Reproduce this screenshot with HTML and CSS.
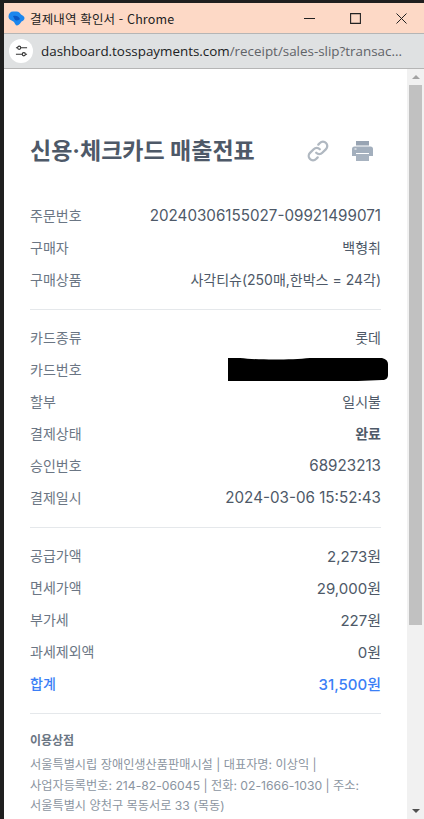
FILE: index.html
```html
<!DOCTYPE html>
<html lang="ko">
<head>
    <meta charset="UTF-8">
    <meta name="viewport" content="width=device-width, initial-scale=1.0">
    <title>결제내역 확인서</title>
    <link rel="stylesheet" href="styles.css">
</head>
<body>
    <div class="window">
        <div class="titlebar">
            <svg class="app-icon" viewBox="0 0 17 15">
                <path d="M5 0.500h3.500c2.500 0 3.500 1.500 4.500 3 1.500.8 3.500 2 3.500 3.500 0 2-1.500 3-3 3.500-1 1.500-2.500 3.500-4.500 4C7.500 14.500 7 12.500 6 11 4.500 9.500 0.500 9 0.500 5.500 0.500 2.500 2.500 0.500 5 0.500z" fill="#1b86ee"/>
                <path d="M5 5c3-.8 5.500 0 7 3-1.500 1.500-3.500 1.800-5 1z" fill="#0b57c4"/>
            </svg>
            <span class="window-title">결제내역 확인서 - Chrome</span>
            <div class="window-buttons">
                <svg viewBox="0 0 11 11"><path d="M0 5.500h11" stroke="#222" stroke-width="1" fill="none"/></svg>
                <svg viewBox="0 0 11 11"><path d="M.6.600h9.800v9.800H.6z" stroke="#222" stroke-width="1.100" fill="none"/></svg>
                <svg viewBox="0 0 11 11"><path d="M.5.500l10 10M10.500.500l-10 10" stroke="#222" stroke-width="1" fill="none"/></svg>
            </div>
        </div>
        <div class="addressbar">
            <div class="site-icon">
                <svg viewBox="0 0 14 12">
                    <path d="M1 2.500h1.500M6.500 2.500H13M1 9.500h6.500M11.500 9.500H13" stroke="#333" stroke-width="1.300" fill="none"/>
                    <circle cx="4.500" cy="2.500" r="1.700" fill="none" stroke="#333" stroke-width="1.200"/>
                    <circle cx="9.500" cy="9.500" r="1.700" fill="none" stroke="#333" stroke-width="1.200"/>
                </svg>
            </div>
            <div class="url"><span class="url-host">dashboard.tosspayments.com</span>/receipt/sales-slip?transac...</div>
        </div>
        <div class="viewport">
            <main class="receipt">
                <div class="receipt-head">
                    <h1>신용·체크카드 매출전표</h1>
                    <div class="head-icons">
                        <svg class="icon-link" viewBox="0 0 24 24">
                            <path d="M10.200 13.800a4.300 4.300 0 0 0 6.100 0l3.700-3.700a4.300 4.300 0 0 0-6.100-6.100l-1.600 1.600" fill="none" stroke="#b0b8c1" stroke-width="2.300" stroke-linecap="round"/>
                            <path d="M13.800 10.200a4.300 4.300 0 0 0-6.100 0L4 13.900A4.300 4.300 0 0 0 10.100 20l1.600-1.600" fill="none" stroke="#b0b8c1" stroke-width="2.300" stroke-linecap="round"/>
                        </svg>
                        <svg class="icon-print" viewBox="0 0 21 20">
                            <path d="M4 0h13v4.500H4z" fill="#98a4b3"/>
                            <path d="M2.500 5.500h16A2.500 2.500 0 0 1 21 8v7h-4v-3H4v3H0V8a2.500 2.500 0 0 1 2.500-2.500z" fill="#a3afbd"/>
                            <path d="M4 13h13v7H4z" fill="#a8b3c0"/>
                            <path d="M2.500 8h2" stroke="#fff" stroke-width="1"/>
                        </svg>
                    </div>
                </div>

                <section class="group">
                    <div class="row"><span class="label">주문번호</span><span class="value num">20240306155027-09921499071</span></div>
                    <div class="row"><span class="label">구매자</span><span class="value">백형취</span></div>
                    <div class="row"><span class="label">구매상품</span><span class="value">사각티슈(250매,한박스 = 24각)</span></div>
                </section>

                <section class="group">
                    <div class="row"><span class="label">카드종류</span><span class="value">롯데</span></div>
                    <div class="row">
                        <span class="label">카드번호</span>
                        <svg class="redacted" viewBox="0 0 160 23">
                            <path d="M0 0h12c18 2 50 2 70 0h72c4 1 6 3 6 6v11c0 3-2 5-6 5l-24 1H0z" fill="#000"/>
                        </svg>
                    </div>
                    <div class="row"><span class="label">할부</span><span class="value">일시불</span></div>
                    <div class="row"><span class="label">결제상태</span><span class="value strong">완료</span></div>
                    <div class="row"><span class="label">승인번호</span><span class="value num">68923213</span></div>
                    <div class="row"><span class="label">결제일시</span><span class="value num">2024-03-06 15:52:43</span></div>
                </section>

                <section class="group">
                    <div class="row"><span class="label">공급가액</span><span class="value money">2,273원</span></div>
                    <div class="row"><span class="label">면세가액</span><span class="value money">29,000원</span></div>
                    <div class="row"><span class="label">부가세</span><span class="value money">227원</span></div>
                    <div class="row"><span class="label">과세제외액</span><span class="value money">0원</span></div>
                    <div class="row total"><span class="label">합계</span><span class="value money">31,500원</span></div>
                </section>

                <section class="merchant">
                    <h2>이용상점</h2>
                    <p>서울특별시립 장애인생산품판매시설 | 대표자명: 이상익 |<br>사업자등록번호: 214-82-06045 | 전화: 02-1666-1030 | 주소: 서울특별시 양천구 목동서로 33 (목동)</p>
                </section>
            </main>
            <div class="scrollbar">
                <span class="arrow-up"></span>
                <div class="track"><div class="thumb"></div></div>
                <span class="arrow-down"></span>
            </div>
        </div>
    </div>
</body>
</html>
```

FILE: styles.css
```css
* {
    margin: 0;
    padding: 0;
    box-sizing: border-box;
}

html, body {
    height: 819px;
    overflow: hidden;
}

body {
    background: #1f1f1f;
    font-family: Inter, "Noto Sans CJK KR", sans-serif;
    color: #333d4b;
}

.window {
    margin: 3px 0 0 4px;
    height: 816px;
    display: flex;
    flex-direction: column;
    background: #fff;
}

.titlebar {
    height: 30px;
    flex: none;
    display: flex;
    align-items: center;
    padding-left: 4px;
    background: #fdd9c6;
}

.app-icon {
    width: 17px;
    height: 15px;
    flex: none;
}

.window-title {
    margin-left: 5px;
    font-size: 12.500px;
    letter-spacing: 0.150px;
    color: #222;
    white-space: nowrap;
    font-family: "Noto Sans CJK KR", sans-serif;
}

.window-buttons {
    margin-left: auto;
    display: flex;
    align-items: center;
    gap: 35px;
    padding-right: 17px;
}

.window-buttons svg {
    width: 11px;
    height: 11px;
    display: block;
}

.addressbar {
    height: 36px;
    flex: none;
    display: flex;
    align-items: center;
    gap: 8px;
    padding-left: 5px;
    background: #dfe1e2;
    border-top: 1px solid #b5b5b5;
    border-bottom: 1px solid #b5b5b5;
}

.site-icon {
    width: 24px;
    height: 24px;
    border-radius: 50%;
    background: #fff;
    display: flex;
    align-items: center;
    justify-content: center;
}

.site-icon svg {
    width: 13px;
    height: 12px;
}

.url {
    font-size: 13.400px;
    color: #5f6368;
    white-space: nowrap;
    font-family: "Open Sans", sans-serif;
}

.url-host {
    color: #202124;
}

.viewport {
    flex: 1;
    display: flex;
    min-height: 0;
}

.receipt {
    flex: 1;
    padding: 67px 26px 0 26px;
    overflow: hidden;
}

.receipt-head {
    display: flex;
    justify-content: space-between;
    align-items: center;
    margin-bottom: 33px;
}

h1 {
    font-size: 23px;
    line-height: 30px;
    font-weight: 700;
    color: #4e5968;
}

.head-icons {
    display: flex;
    align-items: center;
    gap: 22px;
    padding-right: 8px;
}

.icon-link {
    width: 24px;
    height: 24px;
}

.icon-print {
    width: 21px;
    height: 20px;
}

.group {
    padding-bottom: 14px;
    margin-bottom: 11px;
    border-bottom: 1px solid #e5e8eb;
}

.row {
    display: flex;
    justify-content: space-between;
    align-items: center;
    height: 32px;
    font-size: 14px;
}

.label {
    color: #6b7684;
}

.value {
    color: #4e5968;
    font-size: 14px;
}

.num {
    font-size: 15.200px;
}

.money {
    font-size: 15px;
}

.strong {
    font-weight: 600;
}

.redacted {
    width: 160px;
    height: 23px;
    margin-right: -7px;
}

.total .label,
.total .value {
    color: #3b7ff6;
    font-weight: 500;
}

.merchant {
    padding-top: 7px;
}

.merchant h2 {
    font-size: 12px;
    font-weight: 600;
    line-height: 18px;
    color: #6b7684;
    margin-bottom: 5px;
}

.merchant p {
    font-size: 12.200px;
    line-height: 20.500px;
    color: #8b95a1;
    word-break: keep-all;
}

.scrollbar {
    width: 17px;
    flex: none;
    display: flex;
    flex-direction: column;
    align-items: center;
    background: #f1f1f1;
}

.track {
    flex: 1;
    width: 100%;
    padding: 0 2px;
}

.thumb {
    height: 540px;
    background: #c1c1c1;
}

.arrow-up,
.arrow-down {
    flex: none;
    width: 0;
    height: 0;
    margin: 6px 0;
    border-left: 4px solid transparent;
    border-right: 4px solid transparent;
}

.arrow-up {
    border-bottom: 4px solid #a3a3a3;
}

.arrow-down {
    border-top: 4px solid #505050;
}
```
